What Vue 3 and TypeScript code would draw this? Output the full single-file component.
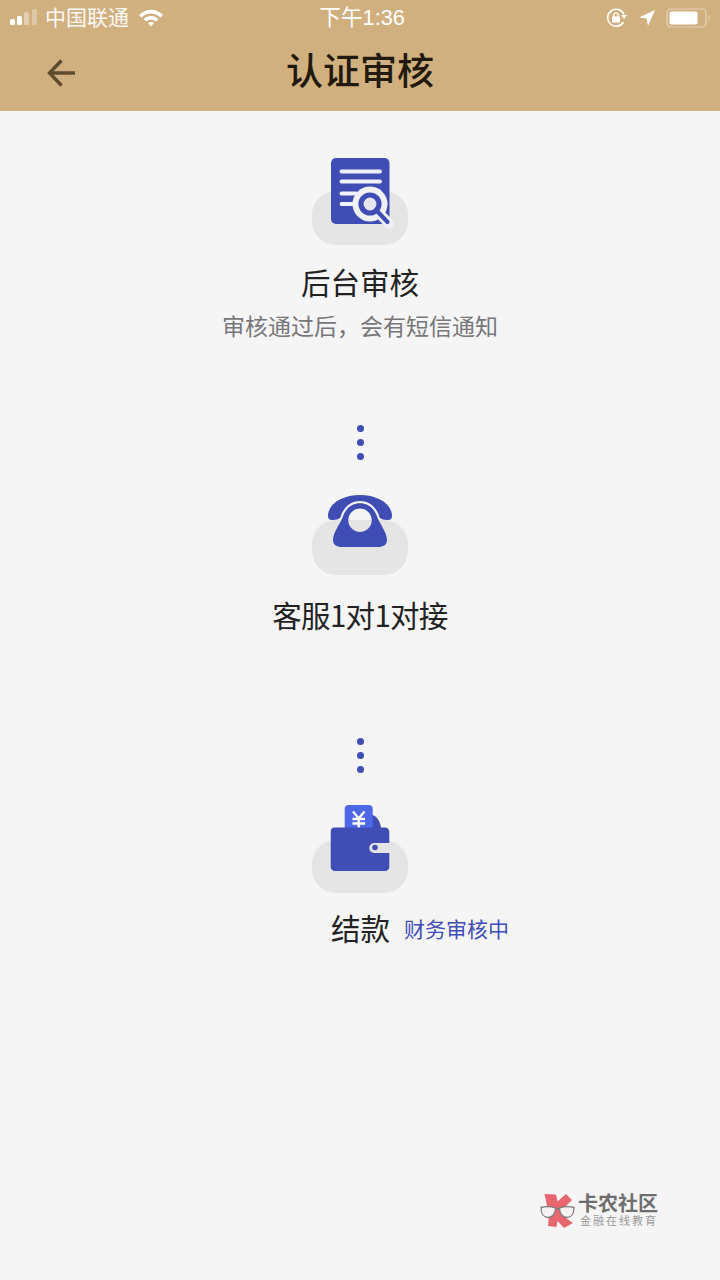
<script setup lang="ts">
const dots = [0, 1, 2]
</script>

<template>
  <div class="page">
    <header class="header">
      <div class="status">
        <div class="status-left">
          <svg class="signal" width="30" height="20" viewBox="0 0 30 20">
            <rect x="0" y="11" width="5" height="6" rx="1.500" fill="#fff" />
            <rect x="7" y="8" width="5" height="9" rx="1.500" fill="#fff" />
            <rect x="14" y="4" width="5" height="13" rx="1.500" fill="#fff" fill-opacity="0.4" />
            <rect x="22" y="1" width="5" height="16" rx="1.500" fill="#fff" fill-opacity="0.3" />
          </svg>
          <span class="carrier">中国联通</span>
          <svg class="wifi" width="26" height="20" viewBox="0 0 26 20">
            <path d="M1 7 C8 0 18 0 25 7 L22.500 9.500 C16.500 4 9.500 4 3.500 9.500 Z" fill="#fff" />
            <path d="M5.500 11 C10 7 16 7 20.500 11 L18 13.500 C15 11 11 11 8 13.500 Z" fill="#fff" />
            <path d="M10 15 C12 13.500 14 13.500 16 15 L13 18.500 Z" fill="#fff" />
          </svg>
        </div>
        <span class="time">下午1:36</span>
        <div class="status-right">
          <svg width="22" height="20" viewBox="0 0 22 20">
            <path d="M17.500 14 A8.500 8.500 0 1 1 18 6.500" fill="none" stroke="#fff" stroke-width="1.600" />
            <path d="M15.500 7 L21 7 L18 11 Z" fill="#fff" />
            <rect x="6" y="8.500" width="8" height="6" rx="1" fill="#fff" />
            <path d="M7.800 9 V7 A2.200 2.200 0 0 1 12.200 7 V9" fill="none" stroke="#fff" stroke-width="1.300" />
          </svg>
          <svg class="nav-arrow" width="18" height="18" viewBox="0 0 18 18">
            <path d="M17 1 L1 8.500 L8.500 9.500 L10 17 Z" fill="#fff" />
          </svg>
          <svg class="battery" width="45" height="20" viewBox="0 0 45 20">
            <rect x="1" y="1" width="39" height="18" rx="4" fill="none" stroke="#fff" stroke-opacity="0.45" stroke-width="1.200" />
            <rect x="3.500" y="3.500" width="28" height="13" rx="2" fill="#fff" />
            <path d="M42.500 7 C44 7.500 44 12.500 42.500 13 Z" fill="#fff" fill-opacity="0.45" />
          </svg>
        </div>
      </div>
      <div class="nav">
        <svg class="back" width="30" height="30" viewBox="0 0 30 30">
          <path d="M15.500 2.500 L3.500 15 L15.500 27.500 M4 15 H29" fill="none" stroke="#5f4c30" stroke-width="3.400" />
        </svg>
        <h1 class="title">认证审核</h1>
      </div>
    </header>

    <main class="steps">
      <section class="step step-review">
        <svg class="icon" width="96" height="90" viewBox="0 0 96 90">
          <rect y="35" width="96" height="54" rx="24" fill="#e5e5e6" />
          <rect x="19" y="2" width="58.500" height="66" rx="5" fill="#3f4db5" />
          <g stroke="#f2f3f8" stroke-width="3.800" stroke-linecap="round">
            <path d="M29.500 15.500 H68" />
            <path d="M29.500 25.500 H68" />
            <path d="M29.500 37.500 H44" />
            <path d="M29.500 48 H42" />
          </g>
          <circle cx="58" cy="48" r="17.500" fill="#f0f1f5" />
          <path d="M66 56 L77 67.500" stroke="#f0f1f5" stroke-width="10" stroke-linecap="round" />
          <circle cx="58" cy="48" r="9" fill="#e5e6ee" stroke="#3f4db5" stroke-width="5.200" />
          <path d="M65.500 55.500 L75.500 66" stroke="#3f4db5" stroke-width="4.200" stroke-linecap="round" />
        </svg>
        <h2 class="label">后台审核</h2>
        <p class="hint">审核通过后，会有短信通知</p>
      </section>

      <div class="dots"><i v-for="d in dots" :key="d"></i></div>

      <section class="step step-service">
        <svg class="icon" width="96" height="82" viewBox="0 0 96 82">
          <rect y="26" width="96" height="55" rx="24" fill="#e5e5e6" />
          <path d="M16 22 C16 10 30 1 48 1 C66 1 80 10 80 22 C80 25 78 26.500 75 26 L71 25.500 C68 25 67 23 66.500 20 C62.500 11.500 56 7 48 7 C40 7 33.500 11.500 29.500 20 C29 23 28 25 25 25.500 L21 26 C18 26.500 16 25 16 22 Z" fill="#3f4db5" />
          <path fill-rule="evenodd" d="M48 9.300 C55.500 9.300 61.500 13.500 64.500 21 C67 29 75 38 75 46 C75 51 71 53 66 53 H30 C25 53 21 51 21 46 C21 38 29 29 31.500 21 C34.500 13.500 40.500 9.300 48 9.300 Z M48 14.500 A11.700 11.700 0 1 0 48.010 37.900 A11.700 11.700 0 1 0 48 14.500 Z" fill="#3f4db5" />
        </svg>
        <h2 class="label label-tight">客服1对1对接</h2>
      </section>

      <div class="dots dots-second"><i v-for="d in dots" :key="d"></i></div>

      <section class="step step-pay">
        <svg class="icon" width="96" height="90" viewBox="0 0 96 90">
          <rect y="36" width="96" height="53" rx="24" fill="#e5e5e6" />
          <path d="M60 11 C65 12 68.500 18 69 24 H60 Z" fill="#3f4db5" />
          <rect x="32.700" y="1" width="28" height="30" rx="4" fill="#4f68e8" />
          <path d="M41 7.500 L46.700 14.500 L52.400 7.500 M40.500 15 H53 M40.500 19.500 H53 M46.700 14.500 V27" fill="none" stroke="#fff" stroke-width="2.300" />
          <path fill-rule="evenodd" d="M22.700 23.500 H73 A4.300 4.300 0 0 1 77.300 27.800 V39 H62.300 A5 5 0 0 0 62.300 49 H77.300 V62.700 A4.300 4.300 0 0 1 73 67 H23 A4.300 4.300 0 0 1 18.700 62.700 V27.500 A4 4 0 0 1 22.700 23.500 Z" fill="#3f4db5" />
          <circle cx="63" cy="43.500" r="2.800" fill="#3f4db5" />
        </svg>
        <div class="pay-row">
          <h2 class="label">结款</h2>
          <span class="pay-status">财务审核中</span>
        </div>
      </section>
    </main>

    <div class="watermark">
      <svg width="36" height="40" viewBox="0 0 36 40">
        <path d="M4.500 3 L16 3.500 L17.500 10.500 L26 3 L32 9 L25 16 L23 25 L33 32 L24 37 L17.500 30 L16.500 36 L8 35 L9 24 Z" fill="#e8666f" />
        <g fill="#f6f2f2" stroke="#7c7c7c" stroke-width="1.300">
          <path d="M1 16.500 C5 15.500 11 15.500 15.500 17 C15.500 23 12 26.500 8 26.500 C4 26.500 1 23 1 16.500 Z" />
          <path d="M34 16.500 C30 15.500 24 15.500 19.500 17 C19.500 23 23 26.500 27 26.500 C31 26.500 34 23 34 16.500 Z" />
          <path d="M15.500 17.500 H19.500" fill="none" />
        </g>
      </svg>
      <div class="mark-text">
        <span class="mark-name">卡农社区</span>
        <span class="mark-sub">金融在线教育</span>
      </div>
    </div>
  </div>
</template>

<style>
html,
body {
  margin: 0;
  background: #f5f5f5;
}
</style>

<style scoped>
.page {
  position: relative;
  width: 720px;
  height: 1280px;
  overflow: hidden;
  background: #f5f5f5;
  font-family: "Noto Sans CJK SC", "Noto Sans", sans-serif;
}

.header {
  height: 111px;
  background: #d1b07f;
}

.status {
  position: relative;
  display: flex;
  align-items: center;
  justify-content: space-between;
  height: 36px;
  color: #fff;
}

.status-left {
  display: flex;
  align-items: center;
  padding-left: 10px;
}

.carrier {
  margin-left: 5px;
  margin-bottom: 4px;
  font-size: 21px;
  line-height: 30px;
  opacity: 0.92;
}

.wifi {
  margin-left: 9px;
}

.time {
  position: absolute;
  left: 4px;
  right: 0;
  top: 0;
  text-align: center;
  font-family: "Liberation Sans", "Noto Sans CJK SC", sans-serif;
  font-size: 21.700px;
  line-height: 35px;
}

.status-right {
  display: flex;
  align-items: center;
  gap: 10px;
  padding-right: 9px;
}

.nav {
  position: relative;
  display: flex;
  align-items: center;
  justify-content: center;
  height: 70px;
}

.back {
  position: absolute;
  left: 46px;
  top: 22px;
}

.title {
  margin: 0 0 4px;
  font-size: 37px;
  font-weight: 500;
  line-height: 66px;
  color: #221a0e;
}

.steps {
  display: flex;
  flex-direction: column;
  align-items: center;
  padding-top: 45px;
}

.step {
  display: flex;
  flex-direction: column;
  align-items: center;
  width: 100%;
}

.icon {
  display: block;
}

.label {
  margin: 0;
  font-size: 29.500px;
  font-weight: 400;
  line-height: 44px;
  color: #222;
}

.label-tight {
  letter-spacing: -0.700px;
}

.step-review .label {
  margin-top: 13px;
}

.hint {
  margin: 0;
  font-size: 23px;
  line-height: 44px;
  color: #77777a;
}

.dots {
  display: flex;
  flex-direction: column;
  gap: 7px;
  margin-top: 78px;
  margin-bottom: 34px;
}

.dots i {
  display: block;
  width: 7px;
  height: 7px;
  border-radius: 50%;
  background: #3f4db5;
}

.step-service .label {
  margin-top: 16px;
}

.dots-second {
  margin-top: 102px;
  margin-bottom: 31px;
}

.pay-row {
  display: flex;
  align-items: center;
  gap: 14px;
  align-self: flex-start;
  margin-top: 11px;
  margin-left: 331px;
}

.pay-status {
  margin-top: 2px;
  font-size: 21px;
  color: #3f4db5;
}

.watermark {
  position: absolute;
  left: 540px;
  top: 1191px;
  display: flex;
  align-items: flex-start;
  gap: 2px;
}

.mark-text {
  display: flex;
  flex-direction: column;
  padding-top: 1px;
}

.mark-name {
  font-size: 20px;
  font-weight: 700;
  line-height: 22px;
  color: #6e6e6e;
}

.mark-sub {
  margin-left: 2px;
  font-size: 11px;
  line-height: 12px;
  letter-spacing: 2px;
  color: #9a9a9a;
}
</style>
